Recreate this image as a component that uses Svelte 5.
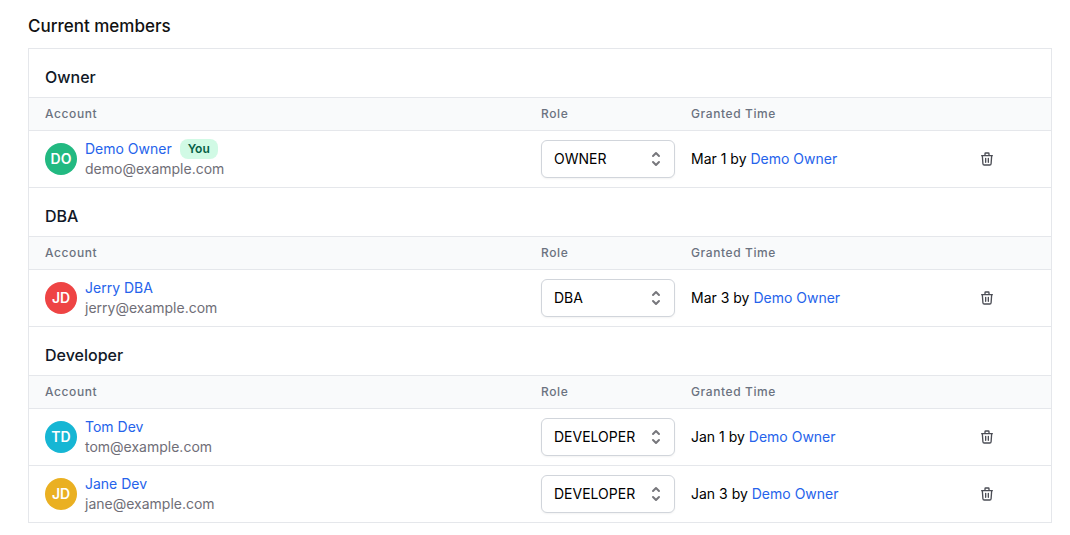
<script>
  const groups = [
    { name: 'Owner', role: 'OWNER', members: [
      { name: 'Demo Owner', email: 'demo@example.com', initials: 'DO', color: '#22b981', date: 'Mar 1', you: true }
    ] },
    { name: 'DBA', role: 'DBA', members: [
      { name: 'Jerry DBA', email: 'jerry@example.com', initials: 'JD', color: '#ee4444', date: 'Mar 3' }
    ] },
    { name: 'Developer', role: 'DEVELOPER', members: [
      { name: 'Tom Dev', email: 'tom@example.com', initials: 'TD', color: '#16b6d4', date: 'Jan 1' },
      { name: 'Jane Dev', email: 'jane@example.com', initials: 'JD', color: '#eab022', date: 'Jan 3' }
    ] }
  ];
  const roles = ['OWNER', 'DBA', 'DEVELOPER'];
</script>

<main>
  <h1>Current members</h1>
  <div class="panel">
    {#each groups as group}
      <section>
        <h2>{group.name}</h2>
        <table aria-label={group.name}>
          <colgroup><col /><col class="role" /><col class="time" /><col class="action" /></colgroup>
          <thead>
            <tr><th>Account</th><th>Role</th><th>Granted Time</th><th></th></tr>
          </thead>
          <tbody>
            {#each group.members as m}
              <tr>
                <td>
                  <div class="account">
                    <span class="avatar" style:background={m.color}>{m.initials}</span>
                    <div>
                      <div class="name"><a href="#member">{m.name}</a>{#if m.you}<span class="you">You</span>{/if}</div>
                      <div class="email">{m.email}</div>
                    </div>
                  </div>
                </td>
                <td>
                  <div class="select">
                    <select aria-label="Role of {m.name}" value={group.role}>
                      {#each roles as r}<option value={r}>{r}</option>{/each}
                    </select>
                    <svg viewBox="0 0 20 20" width="20" height="20" fill="#77777c" aria-hidden="true"><path fill-rule="evenodd" d="M10 3a1 1 0 01.707.293l3 3a1 1 0 01-1.414 1.414L10 5.414 7.707 7.707a1 1 0 01-1.414-1.414l3-3A1 1 0 0110 3zm-3.707 9.293a1 1 0 011.414 0L10 14.586l2.293-2.293a1 1 0 011.414 1.414l-3 3a1 1 0 01-1.414 0l-3-3a1 1 0 010-1.414z" clip-rule="evenodd" /></svg>
                  </div>
                </td>
                <td>{m.date} by <a href="#owner">Demo Owner</a></td>
                <td>
                  <button type="button" aria-label="Remove {m.name}">
                    <svg viewBox="0 0 24 24" width="16" height="16" fill="none" stroke="currentColor" stroke-width="2" stroke-linecap="round" stroke-linejoin="round" aria-hidden="true"><path d="M19 7l-.867 12.142A2 2 0 0116.138 21H7.862a2 2 0 01-1.995-1.858L5 7m5 4v6m4-6v6m1-10V4a1 1 0 00-1-1h-4a1 1 0 00-1 1v3M4 7h16" /></svg>
                  </button>
                </td>
              </tr>
            {/each}
          </tbody>
        </table>
      </section>
    {/each}
  </div>
</main>

<style>
  :global(body) { margin: 0; background: #fff; }
  main {
    padding: 12px 18px 12px 28px;
    font: 14px/20px Inter, sans-serif;
    color: #000;
  }
  h1, h2 { margin: 0; font-weight: 500; color: #111827; }
  h1 { font-size: 17px; line-height: 28px; margin-bottom: 8px; color: #111; }
  h2 { font-size: 16px; line-height: 24px; padding: 16px 16px 8px; }
  .panel { border: 1px solid #e5e7eb; border-bottom: 0; }
  table { width: 100%; table-layout: fixed; border-collapse: separate; border-spacing: 0; }
  .role { width: 150px; }
  .time { width: 284px; }
  .action { width: 92px; }
  th, td { padding: 0 0 0 16px; text-align: left; border-bottom: 1px solid #e5e7eb; }
  th {
    height: 32px;
    border-top: 1px solid #e5e7eb;
    background: #f9fafb;
    font-size: 12px;
    line-height: 16px;
    font-weight: 500;
    letter-spacing: 0.05em;
    color: #6b7280;
  }
  td { height: 56px; }
  a { color: #2563eb; text-decoration: none; }
  .account { display: flex; align-items: center; gap: 8px; }
  .avatar {
    display: grid;
    place-items: center;
    width: 32px;
    height: 32px;
    border-radius: 50%;
    color: #fff;
    font-weight: 600;
  }
  .name { display: flex; align-items: center; gap: 8px; height: 20px; }
  .you {
    padding: 0 8px;
    border-radius: 8px;
    background: #d1fae5;
    color: #065f46;
    font-size: 12px;
    font-weight: 600;
  }
  .email { color: #6f6e77; }
  .select { display: grid; align-items: center; }
  select {
    grid-area: 1 / 1;
    appearance: none;
    width: 100%;
    height: 38px;
    padding: 0 12px;
    border: 1px solid #d1d5db;
    border-radius: 6px;
    background: #fff;
    box-shadow: 0 1px 2px rgb(0 0 0 / 5%);
    font: inherit;
    color: #000;
  }
  .select svg { grid-area: 1 / 1; justify-self: end; margin-right: 9px; pointer-events: none; }
  button { display: grid; margin: 0 0 0 4px; padding: 0; border: 0; background: none; color: #4b4d55; cursor: pointer; }
</style>
